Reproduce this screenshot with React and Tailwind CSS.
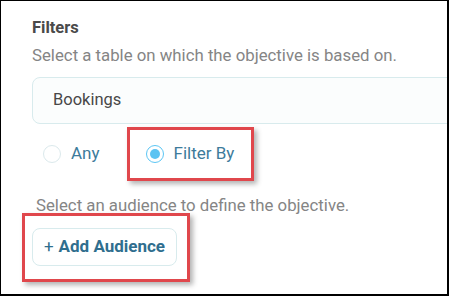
import React, { useState } from 'react'

const Radio = ({ checked }) => (
  <span
    className={
      'flex h-[18px] w-[18px] items-center justify-center rounded-full bg-white ' +
      (checked ? 'border-[1.5px] border-[#5cc6f4]' : 'border border-[#dbe9ec]')
    }
  >
    {checked && <span className="h-[10px] w-[10px] rounded-full bg-[#5cc3f2]" />}
  </span>
)

const App = () => {
  const [mode, setMode] = useState('filter')

  return (
    <div
      className="h-[296px] w-[449px] overflow-hidden border-l border-t border-r-2 border-b-2 border-black bg-white pl-[31px] pt-[17px]"
      style={{ fontFamily: 'Roboto, "Noto Sans", sans-serif' }}
    >
      {/* Header */}
      <h2 className="text-[16.5px] font-bold leading-[20px] text-[#4a4a4a]">Filters</h2>
      <p className="mt-[7px] text-[16.8px] leading-[20px] text-[#858585]">
        Select a table on which the objective is based on.
      </p>

      {/* Table select */}
      <div className="mt-[12px] flex h-[47px] w-[440px] items-center rounded-[8px] border border-[#d8ebed] bg-[#fbfdfd] pl-[20px] text-[16.5px] text-[#484848]">
        Bookings
      </div>

      {/* Radios */}
      <div className="mt-[3px] flex items-center">
        <button
          className="ml-[11px] flex items-center gap-[10px]"
          onClick={() => setMode('any')}
        >
          <Radio checked={mode === 'any'} />
          <span className="text-[17px] text-[#3d7b9b]">Any</span>
        </button>
        <div className="ml-[27px] flex h-[54px] w-[127px] items-center border-[3px] border-[#e0474c] pl-[16px] shadow-[3px_3px_5px_rgba(0,0,0,0.3)]">
          <button className="flex items-center gap-[10px]" onClick={() => setMode('filter')}>
            <Radio checked={mode === 'filter'} />
            <span className="text-[17px] text-[#3d7b9b]">Filter By</span>
          </button>
        </div>
      </div>

      {/* Audience */}
      <p className="ml-[4px] mt-[15px] text-[16.8px] leading-[18px] text-[#858585]">
        Select an audience to define the objective.
      </p>
      <div className="-ml-[10px] -mt-[1px] w-[168px] border-[3px] border-[#e0474c] pb-[13px] pl-[7px] pt-[12px] shadow-[3px_3px_5px_rgba(0,0,0,0.3)]">
        <button className="flex h-[38px] w-[145px] items-center justify-center rounded-[8px] border border-[#d8ebed] bg-white text-[17px] font-bold text-[#2f6e8e]">
          <span className="mr-[5px] font-normal">+</span>Add Audience
        </button>
      </div>
    </div>
  )
}

export default App
